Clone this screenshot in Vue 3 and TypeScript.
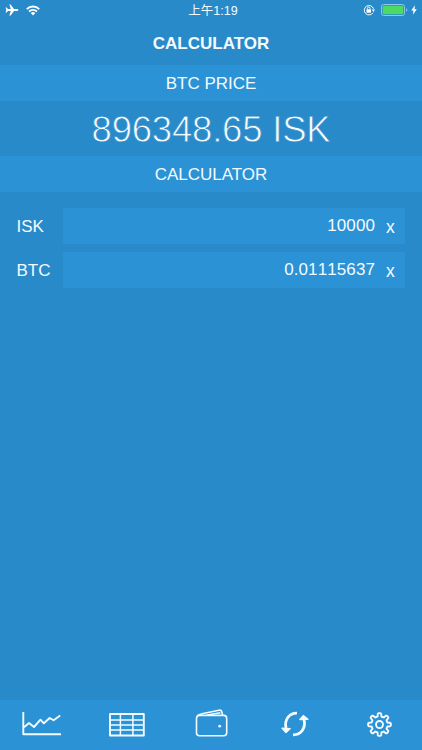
<script setup lang="ts">
import { ref } from 'vue'

interface Row {
  code: string
  value: string
}

const price = '896348.65 ISK'
const rows = ref<Row[]>([
  { code: 'ISK', value: '10000' },
  { code: 'BTC', value: '0.01115637' },
])

function clear(row: Row): void {
  row.value = ''
}

/* Outline of the settings cog: eight teeth around (12.5, 12.5). */
function cogPath(): string {
  const points: string[] = []
  const profile: [number, number][] = [
    [-14, 8.2],
    [-9, 10.8],
    [-5, 11.4],
    [5, 11.4],
    [9, 10.8],
    [14, 8.2],
  ]
  for (let tooth = 0; tooth < 8; tooth++) {
    for (const [offset, radius] of profile) {
      const a = ((tooth * 45 + offset) * Math.PI) / 180
      points.push(`${(12.5 + radius * Math.sin(a)).toFixed(2)} ${(12.5 - radius * Math.cos(a)).toFixed(2)}`)
    }
  }
  return `M${points.join('L')}Z`
}
const cog = cogPath()
</script>

<template>
  <div class="screen">
    <header class="status">
      <div class="status-side">
        <svg class="plane" width="14" height="12" viewBox="0 0 14 12">
          <path d="M13.400 6c0-.6-.7-.9-1.500-.9H9L5.600.5H4.300L5.800 5.100H3L1.600 3.400H.6L1.200 6 .6 8.600h1L3 6.900h2.800L4.300 11.500h1.300L9 6.900h2.900c.8 0 1.500-.3 1.500-.9z" fill="#fff" />
        </svg>
        <svg class="wifi" width="14" height="11" viewBox="0 0 14 11">
          <path d="M.8 4.100a8.700 8.700 0 0 1 12.400 0M3.100 6.500a5.500 5.500 0 0 1 7.800 0" fill="none" stroke="#fff" stroke-width="1.900" />
          <path d="M4.700 8.100a3.200 3.200 0 0 1 4.600 0L7 10.500z" fill="#fff" />
        </svg>
      </div>
      <div class="clock">上午1:19</div>
      <div class="status-side right">
        <svg class="lock" width="12" height="12" viewBox="0 0 12 12">
          <path d="M10 8.700A4.700 4.700 0 1 1 10.500 4.800" fill="none" stroke="#fff" />
          <path d="M8.800 5.500h3.200L10.400 7.900z" fill="#fff" />
          <rect x="3.500" y="5.300" width="4.500" height="3.400" rx=".4" fill="#fff" />
          <path d="M4.400 5.500V4.400a1.350 1.350 0 0 1 2.700 0v1.100" fill="none" stroke="#fff" stroke-width=".9" />
        </svg>
        <svg class="battery" width="27" height="12" viewBox="0 0 27 12">
          <rect x=".5" y=".5" width="23" height="11" rx="2" fill="none" stroke="#8cc4ea" />
          <rect x="1.700" y="1.700" width="20.600" height="8.600" rx="1" fill="#4cd964" />
          <path d="M25 4.200q1.300.5 1.300 1.800T25 7.800z" fill="#8cc4ea" />
        </svg>
        <svg class="bolt" width="6" height="10" viewBox="0 0 6 10">
          <path d="M4 .2L.2 5.600h2.300L1.800 9.800 5.800 4.200H3.500z" fill="#fff" />
        </svg>
      </div>
    </header>
    <h1 class="title">CALCULATOR</h1>

    <h2 class="band">BTC PRICE</h2>
    <div class="price">{{ price }}</div>
    <h2 class="band">CALCULATOR</h2>

    <main class="form">
      <div v-for="row in rows" :key="row.code" class="row">
        <span class="code">{{ row.code }}</span>
        <div class="field">
          <span class="value">{{ row.value }}</span>
          <span class="clear" @click="clear(row)">x</span>
        </div>
      </div>
    </main>

    <nav class="tabs">
      <div class="tab">
        <svg class="chart" width="40" height="26" viewBox="0 0 40 26">
          <path d="M2.300.9V23.200H40" />
          <path d="M3 16.200l5-4.100 5 3.900 6.500-7.300 3.300 3.600 5.900-5.300 3.900 2.300 6.600-4.700" />
        </svg>
      </div>
      <div class="tab">
        <svg class="table" width="36" height="24" viewBox="0 0 36 24">
          <rect x="1" y="1" width="33.800" height="21.500" />
          <path d="M1 6.900h33.800M1 12h33.800M1 17.100h33.800M11.400 1v21.500M23.900 1v21.500" stroke-width="1.500" />
        </svg>
      </div>
      <div class="tab">
        <svg class="wallet" width="34" height="28" viewBox="0 0 34 28">
          <rect x="1.500" y="6.400" width="30.200" height="20.300" rx="3" />
          <path d="M2.500 6.700Q4 5.500 7 4.800L24 1.200Q26.400.8 26.900 3L27.500 6M12 6L25.400 3.800" />
          <circle class="solid" cx="24.700" cy="17.200" r="1.400" />
        </svg>
      </div>
      <div class="tab">
        <svg class="refresh" width="28" height="26" viewBox="0 0 28 26">
          <path d="M16 2.200C8 2 3.200 9 5 17M12 23.800C20.500 24 25 16.500 23 8.500" />
          <path class="head" d="M1.100 17.300l8.100.3-4.200 4zM18.900 8.500l3.400-3.900 4.600 3.600z" />
        </svg>
      </div>
      <div class="tab">
        <svg class="cog" width="25" height="25" viewBox="0 0 25 25">
          <path :d="cog" />
          <circle cx="12.500" cy="12.500" r="3.500" />
        </svg>
      </div>
    </nav>
  </div>
</template>

<style>
body {
  margin: 0;
  background: #298aca;
}
</style>

<style scoped>
.screen {
  display: flex;
  flex-direction: column;
  width: 100%;
  height: 100vh;
  overflow: hidden;
  background: #298aca;
  color: #f3fbff;
  font-family: "Liberation Sans", "Noto Sans CJK SC", sans-serif;
}
.status {
  display: grid;
  grid-template-columns: 1fr auto 1fr;
  align-items: center;
  height: 21px;
  padding: 0 5px 0 5px;
}
.status-side {
  display: flex;
  align-items: center;
}
.plane,
.wifi {
  margin-bottom: 1px;
}
.wifi {
  margin-left: 7px;
}
.right {
  justify-content: flex-end;
}
.lock,
.battery,
.bolt {
  margin-bottom: 1px;
}
.battery {
  margin-left: 6px;
}
.bolt {
  margin-left: 3px;
}
.clock {
  padding-left: 4px;
  font-size: 12.500px;
  line-height: 20px;
}
.title {
  margin: 0;
  height: 44px;
  font-size: 17px;
  line-height: 45px;
  font-weight: 700;
  text-align: center;
}
.band {
  margin: 0;
  height: 36px;
  background: #2b92d6;
  font-size: 17px;
  line-height: 38px;
  font-weight: 400;
  text-align: center;
}
.price {
  height: 55px;
  font-size: 36.500px;
  line-height: 57px;
  text-align: center;
  letter-spacing: -0.2px;
  -webkit-text-stroke: 0.8px #298aca;
}
.form {
  flex: 1;
  display: flex;
  flex-direction: column;
  gap: 8px;
  padding: 16px 17px 0 16px;
}
.row {
  display: flex;
  height: 36px;
}
.code {
  width: 46.500px;
  padding-left: 0.5px;
  font-size: 17px;
  line-height: 37px;
}
.field {
  flex: 1;
  display: flex;
  justify-content: flex-end;
  background: #2b92d6;
  font-size: 17px;
  line-height: 36px;
}
.value {
  font-kerning: none;
  letter-spacing: 0.1px;
}
.clear {
  width: 9px;
  margin: 1px 10px 0 11px;
  font-size: 17.500px;
}
.tabs {
  display: grid;
  grid-template-columns: repeat(5, 1fr);
  height: 50px;
  background: #2b92d6;
}
.tab {
  display: flex;
  align-items: center;
  justify-content: center;
  padding-bottom: 2px;
}
.tab svg {
  fill: none;
  stroke: #f3fbff;
  stroke-width: 1.900;
  stroke-linejoin: round;
}
.tab svg.chart {
  margin-right: 2px;
}
.tab svg.table {
  margin-top: 2px;
}
.tab svg.wallet {
  stroke-width: 1.600;
  margin-left: 2px;
  margin-bottom: 2px;
}
.tab svg.refresh {
  stroke-width: 2.800;
}
.tab svg .solid {
  fill: #f3fbff;
  stroke: none;
}
.tab svg .head {
  fill: #f3fbff;
  stroke-width: 1.400;
}
</style>
